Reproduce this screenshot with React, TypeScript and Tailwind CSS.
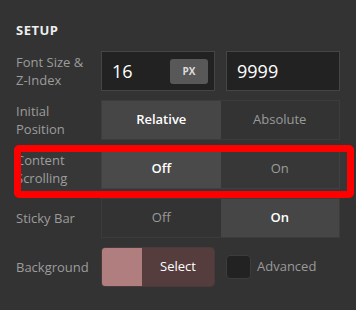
import React from 'react';

const font = { fontFamily: '"Open Sans", "Noto Sans", sans-serif' };

interface SegmentProps {
  options: [string, string];
  active: 0 | 1;
}

const Segment: React.FC<SegmentProps> = ({ options, active }) => (
  <div className="flex w-[239px] h-10 border border-[#3c3c3c]">
    {options.map((opt, i) => (
      <div
        key={opt}
        className={`flex-1 flex items-center justify-center text-[13px] ${
          i === active ? 'bg-[#464646] text-white font-semibold' : 'bg-[#333333] text-[#9a9a9a]'
        }`}
      >
        {opt}
      </div>
    ))}
  </div>
);

const Label: React.FC<{ children: React.ReactNode }> = ({ children }) => (
  <div className="w-[85px] text-[13px] leading-[18px] text-[#9c9c9c]">{children}</div>
);

export default function App() {
  return (
    <div className="relative w-[356px] h-[310px] bg-[#333333] pl-4 pr-4 pt-[21px]" style={font}>
      {/* Header */}
      <div className="text-[13px] leading-[18px] font-bold tracking-[0.5px] text-[#eeeeee]">SETUP</div>

      <div className="flex flex-col gap-[9px] mt-3">
        {/* Font size & z-index */}
        <div className="flex items-center h-10">
          <Label>
            Font Size &amp;
            <br />
            Z-Index
          </Label>
          <div className="flex gap-[11px]">
            <div className="flex items-center justify-between w-[114px] h-10 bg-[#222222] border border-[#454545] pl-[10px] pr-[6px]">
              <span className="text-[18px] text-white">16</span>
              <span className="flex items-center justify-center w-[38px] h-[25px] rounded-[3px] bg-[#585858] text-[10px] font-bold text-[#dddddd]">
                PX
              </span>
            </div>
            <div className="flex items-center w-[114px] h-10 bg-[#222222] border border-[#454545] pl-[10px]">
              <span className="text-[18px] text-white">9999</span>
            </div>
          </div>
        </div>

        {/* Initial position */}
        <div className="flex items-center h-10">
          <Label>
            Initial
            <br />
            Position
          </Label>
          <Segment options={['Relative', 'Absolute']} active={0} />
        </div>

        {/* Content scrolling */}
        <div className="flex items-center h-10">
          <Label>
            Content
            <br />
            Scrolling
          </Label>
          <Segment options={['Off', 'On']} active={0} />
        </div>

        {/* Sticky bar */}
        <div className="flex items-center h-10">
          <Label>Sticky Bar</Label>
          <Segment options={['Off', 'On']} active={1} />
        </div>

        {/* Background */}
        <div className="flex items-center h-10">
          <Label>Background</Label>
          <div className="flex w-[114px] h-10 rounded-[4px] overflow-hidden border border-[#4a3a3a]">
            <div className="w-10 bg-[#b07e7f]" />
            <div className="flex-1 flex items-center justify-center bg-[#553d3e] text-[13px] text-white">
              Select
            </div>
          </div>
          <div className="ml-[11px] w-[25px] h-[24px] rounded-[4px] bg-[#222222] border border-[#3c3c3c]" />
          <span className="ml-[6px] text-[13px] text-[#9a9a9a]">Advanced</span>
        </div>
      </div>

      {/* Highlight overlay */}
      <div className="absolute left-[14px] top-[145px] w-[340px] h-[53px] border-[7px] border-[#ff0000] rounded-[5px] bg-[#ffffff06]" />
    </div>
  );
}
